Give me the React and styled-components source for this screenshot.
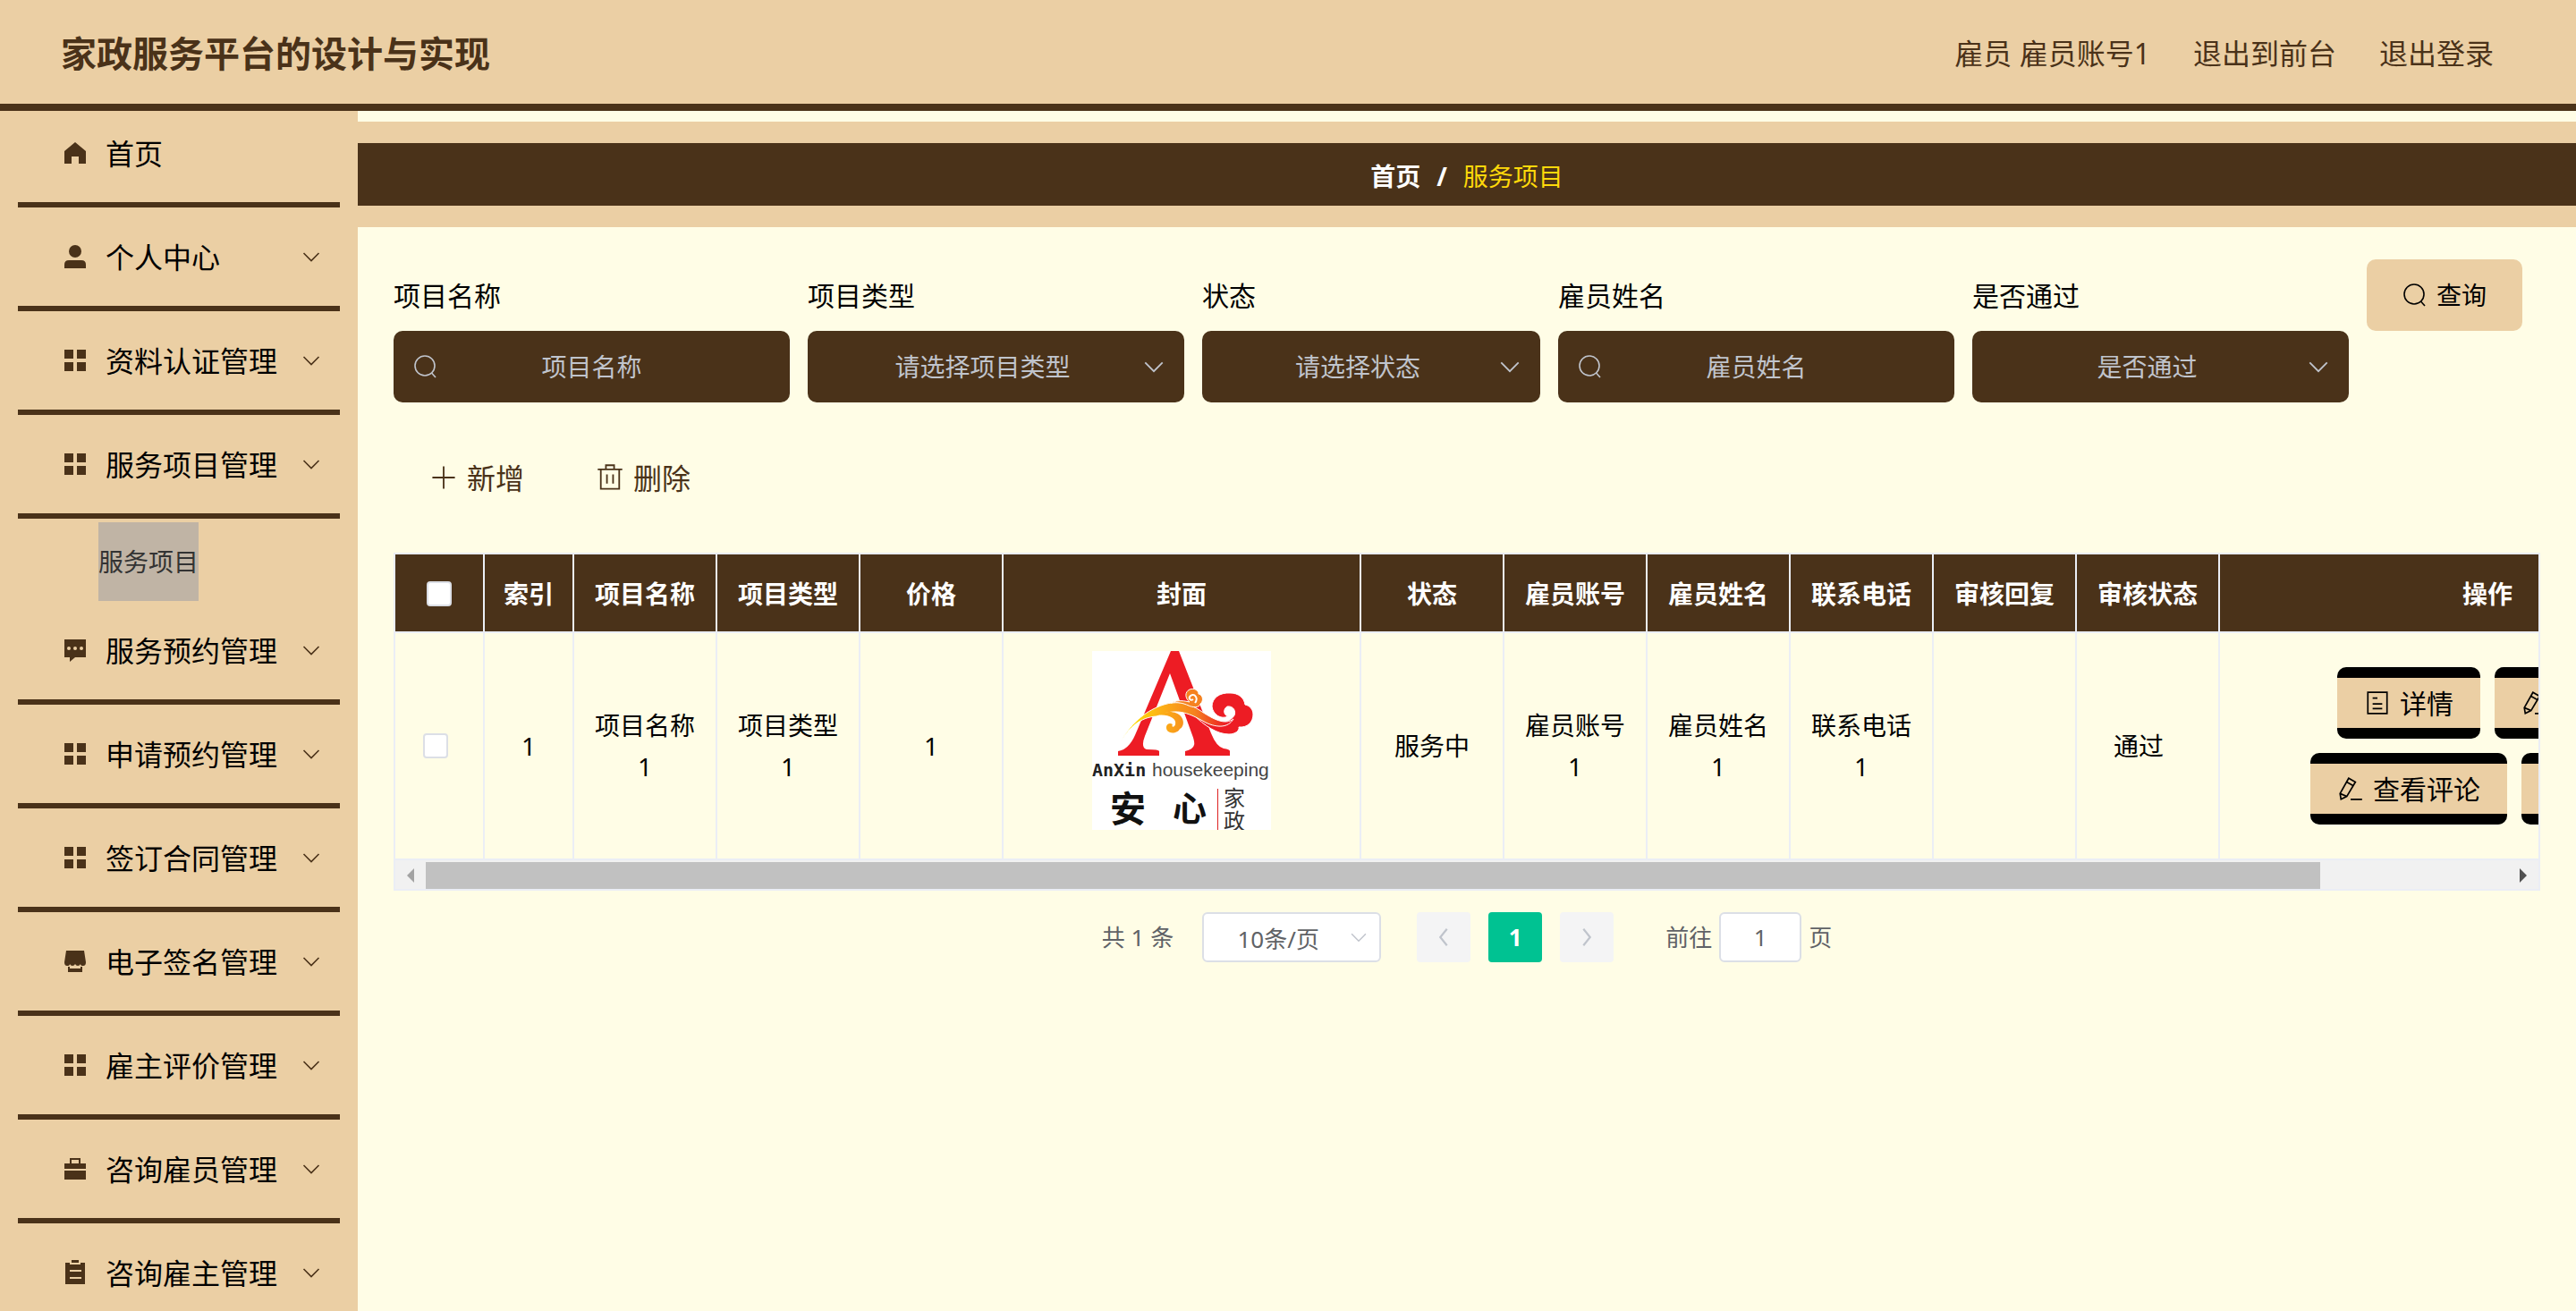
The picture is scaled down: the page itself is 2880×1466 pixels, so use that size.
import React, { useRef } from "react";
import styled, { createGlobalStyle, css } from "styled-components";

const tan = "#ebcfa4";
const brown = "#4a3219";
const cream = "#fffde6";
const line = "#ebeef5";

const GlobalStyle = createGlobalStyle`
  *, *::before, *::after { box-sizing: border-box; }
  html, body, #root { height: 100%; }
  body {
    margin: 0;
    overflow: hidden;
    background: ${cream};
    color: #000;
    font: 28px/46px "Noto Sans", "Noto Sans CJK SC", sans-serif;
  }
  button, input, select { font: inherit; color: inherit; margin: 0; }
  button { cursor: pointer; }
`;

const Page = styled.div`
  display: flex;
  flex-direction: column;
  min-height: 100vh;
`;

const Header = styled.header`
  position: relative;
  z-index: 1;
  display: flex;
  align-items: center;
  justify-content: space-between;
  height: 116px;
  padding: 4px 92px 0 68px;
  background: ${tan};
  box-shadow: 0 8px 0 ${brown};
  color: ${brown};
`;

const Title = styled.h1`
  margin: 0;
  font-size: 40px;
  line-height: 56px;
  font-weight: 700;
`;

const Account = styled.div`
  display: flex;
  gap: 48px;
  font-size: 32px;
`;

const HeaderLink = styled.a`
  color: inherit;
  text-decoration: none;
`;

const Body = styled.div`
  display: flex;
  flex: 1;
  min-height: 0;
`;

const Sidebar = styled.nav`
  flex: none;
  width: 400px;
  padding: 0 20px;
  background: ${tan};
`;

const MenuButton = styled.button`
  display: flex;
  align-items: center;
  gap: 20px;
  width: 100%;
  height: 116px;
  padding: 0 18px 0 50px;
  border: 0;
  border-bottom: 6px solid ${brown};
  background: none;
  color: #000;
  font-size: 32px;
  text-align: left;
`;

const MenuText = styled.span`
  flex: 1;
  padding-top: 2px;
`;

const SubMenu = styled.div`
  display: flex;
  padding: 4px 0 0 90px;
`;

const SubLink = styled.a`
  background: #c0b4a5;
  color: #333;
  line-height: 88px;
  text-decoration: none;
`;

const Icon = styled.svg`
  flex: none;
  width: ${(p) => p.$size || 28}px;
  height: ${(p) => p.$size || 28}px;
  color: ${(p) => p.$color || "inherit"};
`;

const Main = styled.main`
  flex: 1;
  min-width: 0;
  padding-top: 20px;
`;

const CrumbBand = styled.div`
  padding: 24px 0;
  background: ${tan};
`;

const Crumbs = styled.nav`
  display: flex;
  align-items: center;
  justify-content: center;
  height: 70px;
  padding-top: 4px;
  background: ${brown};
  color: #fff;
  font-weight: 700;
`;

const CrumbLink = styled.a`
  color: #fff;
  text-decoration: none;
`;

const Slash = styled.span`
  margin: 0 18px;
`;

const Current = styled.span`
  color: #ffd90a;
  font-weight: 400;
`;

const Content = styled.div`
  padding: 36px 40px;
`;

const Filters = styled.form`
  display: flex;
  flex-wrap: wrap;
  align-items: flex-start;
  gap: 20px;
`;

const Field = styled.div`
  display: flex;
  flex-direction: column;
  width: ${(p) => p.$width}px;
`;

const Label = styled.label`
  height: 80px;
  font-size: 30px;
  line-height: 82px;
`;

const Control = styled.div`
  position: relative;
`;

const controlStyle = css`
  width: 100%;
  height: 80px;
  border: 0;
  border-radius: 10px;
  background: ${brown};
  color: #c0c4cc;
  text-align: center;
  font-size: 28px;
`;

const TextInput = styled.input`
  ${controlStyle}
  padding: 0 60px;
  &::placeholder { color: #c0c4cc; opacity: 1; }
`;

const Picker = styled.select`
  ${controlStyle}
  appearance: none;
  padding: 0 60px 0 30px;
  text-align-last: center;
`;

const Affix = styled.span`
  position: absolute;
  top: 0;
  bottom: 0;
  ${(p) => p.$side}: ${(p) => p.$inset}px;
  display: flex;
  align-items: center;
  color: #c0c4cc;
  pointer-events: none;
`;

const QueryButton = styled.button`
  display: flex;
  align-items: center;
  justify-content: center;
  gap: 10px;
  width: 174px;
  height: 80px;
  border: 0;
  border-radius: 10px;
  background: ${tan};
  color: #000;
  font-size: 28px;
`;

const Toolbar = styled.div`
  display: flex;
  margin-top: 44px;
`;

const ToolButton = styled.button`
  display: flex;
  align-items: center;
  gap: 10px;
  height: 80px;
  padding: 0 40px;
  border: 0;
  background: none;
  color: ${brown};
  font-size: 32px;
`;

const ButtonText = styled.span`
  padding-top: 2px;
`;

const TableFrame = styled.div`
  margin-top: 44px;
  border: 2px solid ${line};
`;

const Viewport = styled.div`
  overflow-x: auto;
  scrollbar-width: none;
`;

const Table = styled.table`
  width: 2640px;
  table-layout: fixed;
  border-collapse: separate;
  border-spacing: 0;
  text-align: center;
`;

const Th = styled.th`
  height: 88px;
  padding: 2px 20px 0;
  border-right: 2px solid ${line};
  border-bottom: 2px solid ${line};
  background: ${brown};
  color: #fff;
  font-weight: 700;
`;

const Td = styled.td`
  padding: 20px ${(p) => p.$trail || 20}px 20px 20px;
  border-right: 2px solid ${line};
  border-bottom: 2px solid ${line};
`;

const Check = styled.input`
  appearance: none;
  display: block;
  width: 28px;
  height: 28px;
  margin: 0 auto !important;
  border: 2px solid #dcdfe6;
  border-radius: 4px;
  background: #fff;
`;

const Cover = styled.svg`
  display: block;
  width: 200px;
  height: 200px;
  margin: 0 auto 12px;
  background: #fff;
`;

const ActionRow = styled.div`
  display: flex;
  justify-content: center;
  gap: 16px;
  & + & { margin-top: 16px; }
`;

const ActionButton = styled.button`
  display: flex;
  align-items: center;
  gap: 10px;
  height: 80px;
  padding: 0 30px;
  border: solid #000;
  border-width: 12px 0;
  border-radius: 10px;
  background: ${tan};
  color: #000;
  font-size: 30px;
  white-space: nowrap;
`;

const ScrollBar = styled.div`
  display: flex;
  height: 32px;
  padding-top: 2px;
  background: #f1f1f1;
`;

const ScrollArrow = styled.button`
  display: flex;
  align-items: center;
  justify-content: center;
  width: 34px;
  padding: 0;
  border: 0;
  background: none;
`;

const Track = styled.div`
  flex: 1;
`;

const Thumb = styled.div`
  width: 91%;
  height: 100%;
  background: #c1c1c1;
`;

const Pager = styled.div`
  display: flex;
  align-items: center;
  justify-content: center;
  margin-top: 24px;
  color: #606266;
  font-size: 26px;
  line-height: 56px;
`;

const PageSize = styled(Control)`
  width: 200px;
  margin: 0 40px 0 32px;
`;

const boxStyle = css`
  height: 56px;
  border: 2px solid #dcdfe6;
  border-radius: 6px;
  background: #fff;
  color: #606266;
  font-size: 26px;
  text-align: center;
`;

const SizeSelect = styled.select`
  ${boxStyle}
  display: block;
  width: 100%;
  appearance: none;
  padding: 0 50px 0 20px;
  text-align-last: center;
`;

const PageButton = styled.button`
  display: flex;
  align-items: center;
  justify-content: center;
  width: 60px;
  height: 56px;
  padding: 0;
  border: 0;
  border-radius: 4px;
  background: ${(p) => (p.$active ? "#00c292" : "#f4f4f5")};
  color: ${(p) => (p.$active ? "#fff" : "#c0c4cc")};
  font-weight: 700;
  & + & { margin-left: 20px; }
`;

const Jump = styled.label`
  display: flex;
  align-items: center;
  gap: 8px;
  margin-left: 58px;
`;

const JumpInput = styled.input`
  ${boxStyle}
  width: 92px;
`;

const stroke = { fill: "none", stroke: "currentColor", strokeWidth: 1.6 };

const shapes = {
  home: <path fill="currentColor" d="M14 2 26 12V26H18V18H10V26H2V12Z" />,
  user: (
    <g fill="currentColor">
      <ellipse cx="14" cy="8" rx="7" ry="7" />
      <path d="M2 27V23Q2 18 7 18H21Q26 18 26 23V27Z" />
    </g>
  ),
  grid: <path fill="currentColor" d="M2 2H12V12H2ZM16 2H26V12H16ZM2 16H12V26H2ZM16 16H26V26H16Z" />,
  chat: (
    <g>
      <path fill="currentColor" d="M2 2H26V22H14L8 27V22H2Z" />
      <g fill={tan}>
        <circle cx="7" cy="12" r="2" />
        <circle cx="14" cy="12" r="2" />
        <circle cx="21" cy="12" r="2" />
      </g>
    </g>
  ),
  shop: (
    <g fill="currentColor">
      <path d="M4 2H24L26 15Q26 19 23 19 20 19 20 17 19 19 17 19 15 19 14 17 13 19 11 19 9 19 8 17 8 19 5 19 2 19 2 15Z" />
      <path d="M6 20H8V22H20V20H22V26H6Z" />
    </g>
  ),
  briefcase: <path fill="currentColor" fillRule="evenodd" d="M8 8V2H20V8H26V14H2V8ZM10 4V8H18V4ZM2 16H26V26H2Z" />,
  clipboard: <path fill="currentColor" fillRule="evenodd" d="M10 0H18V3H10ZM3 3H8V5H20V3H25V27H3ZM8 11V13H21V11ZM8 19V21H21V19Z" />,
  down: <path {...stroke} d="M5.500 10 14 18.500 22.500 10" />,
  left: <path {...stroke} strokeWidth="2.400" d="M18 4 10 14 18 24" />,
  right: <path {...stroke} strokeWidth="2.400" d="M10 4 18 14 10 24" />,
  search: (
    <g {...stroke}>
      <circle cx="13" cy="13" r="11" />
      <path d="M20.500 21 25 26" />
    </g>
  ),
  plus: <path {...stroke} d="M14 3V25M3 14H25" />,
  trash: <path {...stroke} d="M2 6H26M5 6V25H23V6M10 6V2H18V6M11 11V20M17 11V20" />,
  detail: <path {...stroke} d="M4 3H24V25H4ZM9 9H14M9 15H19M9 20H19" />,
  edit: <path {...stroke} d="M3 19 12 3 19 7 10 22 4 25ZM10 7 17 11M3 19 10 22M14 25H26" />,
};

function Glyph({ name, size, color }) {
  return (
    <Icon viewBox="0 0 28 28" $size={size} $color={color} aria-hidden="true">
      {shapes[name]}
    </Icon>
  );
}

const menu = [
  { icon: "home", text: "首页" },
  { icon: "user", text: "个人中心", more: true },
  { icon: "grid", text: "资料认证管理", more: true },
  { icon: "grid", text: "服务项目管理", more: true, child: "服务项目" },
  { icon: "chat", text: "服务预约管理", more: true },
  { icon: "grid", text: "申请预约管理", more: true },
  { icon: "grid", text: "签订合同管理", more: true },
  { icon: "shop", text: "电子签名管理", more: true },
  { icon: "grid", text: "雇主评价管理", more: true },
  { icon: "briefcase", text: "咨询雇员管理", more: true },
  { icon: "clipboard", text: "咨询雇主管理", more: true },
];

const filters = [
  { id: "name", label: "项目名称", hint: "项目名称", width: 443 },
  { id: "type", label: "项目类型", hint: "请选择项目类型", width: 421, select: true },
  { id: "state", label: "状态", hint: "请选择状态", width: 378, select: true },
  { id: "employee", label: "雇员姓名", hint: "雇员姓名", width: 443 },
  { id: "passed", label: "是否通过", hint: "是否通过", width: 421, select: true },
];

const columns = [
  ["索引", 100],
  ["项目名称", 160],
  ["项目类型", 160],
  ["价格", 160],
  ["封面", 400],
  ["状态", 160],
  ["雇员账号", 160],
  ["雇员姓名", 160],
  ["联系电话", 160],
  ["审核回复", 160],
  ["审核状态", 160],
  ["操作", 600],
];

function FilterField({ id, label, hint, width, select }) {
  return (
    <Field $width={width}>
      <Label htmlFor={id}>{label}</Label>
      <Control>
        {select ? (
          <Picker id={id}>
            <option>{hint}</option>
          </Picker>
        ) : (
          <TextInput id={id} placeholder={hint} />
        )}
        <Affix $side={select ? "right" : "left"} $inset={select ? 18 : 22}>
          <Glyph name={select ? "down" : "search"} size={select ? 32 : 28} />
        </Affix>
      </Control>
    </Field>
  );
}

function CoverImage() {
  return (
    <Cover viewBox="0 0 200 200" role="img" aria-label="AnXin housekeeping">
      <defs>
        <linearGradient id="ribbon" gradientUnits="userSpaceOnUse" x1="32" x2="150" y1="0" y2="0">
          <stop offset="0" stopColor="#fff200" />
          <stop offset="0.35" stopColor="#fdb515" />
          <stop offset="0.7" stopColor="#f58220" />
          <stop offset="1" stopColor="#ed1c24" />
        </linearGradient>
      </defs>
      <path
        fill="#ed1c24"
        d="M88 0H97L133 92Q139 107 147 109 154 110 154 112V117H104V112Q113 110 114 105 115 102 112 94L87 25 59 95Q54 108 61 110 75 110 75 112V117H29V112Q41 110 48 94Z"
      />
      <path
        fill="#ed1c24"
        stroke="#fff"
        strokeWidth="1"
        d="M112 70C126 84 140 93 153 93 160 93 165 89 164 85 174 86 180 79 180 71 180 65 176 61 171 60 170 52 163 47 155 47 142 46 134 53 134 62 135 71 144 77 152 73 147 72 146 65 151 62 158 61 161 67 159 72 154 80 144 81 134 76L112 62Z"
      />
      <path
        fill="url(#ribbon)"
        stroke="#fff"
        strokeWidth="1"
        d="M32 101C45 78 62 66 80 60 96 55 107 58 120 66 136 77 149 83 158 76 152 86 140 86 127 80 111 71 96 62 72 73 53 74 42 86 32 101Z"
      />
      <path
        fill="url(#ribbon)"
        d="M72 72C82 66 95 67 100 74 104 80 101 86 98 87 96 92 87 93 84 89 81 84 85 79 90 82 88 85 92 86 93 82 95 75 84 70 72 72Z"
      />
      <path
        fill="#f58220"
        stroke="#fff"
        strokeWidth="1"
        d="M88 58C97 54 104 56 109 57 104 53 103 46 109 43 114 41 119 44 119 48 124 49 125 56 121 59 120 64 112 63 108 61 101 58 96 57 88 58Z"
      />
      <path fill="none" stroke="#fff" strokeWidth="2" d="M115 58C119 53 115 47 110 50 107 53 110 56 113 54" />
      <text x="0" y="140" fontFamily="DejaVu Sans Mono, monospace" fontSize="20" fontWeight="700" fill="#222">AnXin</text>
      <text x="67" y="140" fontFamily="Liberation Sans, sans-serif" fontSize="21" fill="#444">housekeeping</text>
      <text x="20" y="191" fontFamily="Noto Sans CJK SC, sans-serif" fontSize="40" fontWeight="700" fill="#111">安</text>
      <text x="90" y="190" fontFamily="Noto Sans CJK SC, sans-serif" fontSize="38" fontWeight="700" fill="#111">心</text>
      <path stroke="#d22" d="M140.500 154V200" />
      <text x="147" y="173" fontFamily="Noto Sans CJK SC, sans-serif" fontSize="24" fill="#333">家</text>
      <text x="147" y="199" fontFamily="Noto Sans CJK SC, sans-serif" fontSize="24" fill="#333">政</text>
    </Cover>
  );
}

function Action({ icon, children }) {
  return (
    <ActionButton type="button">
      <Glyph name={icon} size={30} />
      <ButtonText>{children}</ButtonText>
    </ActionButton>
  );
}

function ProjectTable() {
  const view = useRef(null);
  const scroll = (by) => view.current.scrollBy({ left: by });
  return (
    <TableFrame>
      <Viewport ref={view}>
        <Table>
          <colgroup>
            <col width="100" />
            {columns.map(([name, width]) => (
              <col key={name} width={width} />
            ))}
          </colgroup>
          <thead>
            <tr>
              <Th>
                <Check type="checkbox" aria-label="全选" />
              </Th>
              {columns.map(([name]) => (
                <Th key={name}>{name}</Th>
              ))}
            </tr>
          </thead>
          <tbody>
            <tr>
              <Td $trail={28}>
                <Check type="checkbox" aria-label="选择" />
              </Td>
              <Td>1</Td>
              <Td>项目名称1</Td>
              <Td>项目类型1</Td>
              <Td>1</Td>
              <Td>
                <CoverImage />
              </Td>
              <Td>服务中</Td>
              <Td>雇员账号1</Td>
              <Td>雇员姓名1</Td>
              <Td>联系电话1</Td>
              <Td />
              <Td $trail={40}>通过</Td>
              <Td>
                <ActionRow>
                  <Action icon="detail">详情</Action>
                  <Action icon="edit">修改</Action>
                </ActionRow>
                <ActionRow>
                  <Action icon="edit">查看评论</Action>
                  <Action icon="trash">删除</Action>
                </ActionRow>
              </Td>
            </tr>
          </tbody>
        </Table>
      </Viewport>
      <ScrollBar>
        <ScrollArrow type="button" aria-label="向左滚动" onClick={() => scroll(-120)}>
          <svg width="8" height="16" viewBox="0 0 8 16">
            <path fill="#a3a3a3" d="M8 0V16L0 8Z" />
          </svg>
        </ScrollArrow>
        <Track>
          <Thumb />
        </Track>
        <ScrollArrow type="button" aria-label="向右滚动" onClick={() => scroll(120)}>
          <svg width="8" height="16" viewBox="0 0 8 16">
            <path fill="#505050" d="M0 0V16L8 8Z" />
          </svg>
        </ScrollArrow>
      </ScrollBar>
    </TableFrame>
  );
}

export default function App() {
  return (
    <Page>
      <GlobalStyle />
      <Header>
        <Title>家政服务平台的设计与实现</Title>
        <Account>
          <span>雇员 雇员账号1</span>
          <HeaderLink href="#front">退出到前台</HeaderLink>
          <HeaderLink href="#logout">退出登录</HeaderLink>
        </Account>
      </Header>
      <Body>
        <Sidebar>
          {menu.map((item) => (
            <React.Fragment key={item.text}>
              <MenuButton type="button">
                <Glyph name={item.icon} color={brown} size={28} />
                <MenuText>{item.text}</MenuText>
                {item.more && <Glyph name="down" size={28} color={brown} />}
              </MenuButton>
              {item.child && (
                <SubMenu>
                  <SubLink href="#project">{item.child}</SubLink>
                </SubMenu>
              )}
            </React.Fragment>
          ))}
        </Sidebar>
        <Main>
          <CrumbBand>
            <Crumbs>
              <CrumbLink href="#home">首页</CrumbLink>
              <Slash>/</Slash>
              <Current>服务项目</Current>
            </Crumbs>
          </CrumbBand>
          <Content>
            <Filters>
              {filters.map((f) => (
                <FilterField key={f.id} {...f} />
              ))}
              <QueryButton type="button">
                <Glyph name="search" size={28} />
                查询
              </QueryButton>
            </Filters>
            <Toolbar>
              <ToolButton type="button">
                <Glyph name="plus" size={32} />
                <ButtonText>新增</ButtonText>
              </ToolButton>
              <ToolButton type="button">
                <Glyph name="trash" size={32} />
                <ButtonText>删除</ButtonText>
              </ToolButton>
            </Toolbar>
            <ProjectTable />
            <Pager>
              <span>共 1 条</span>
              <PageSize>
                <SizeSelect aria-label="每页条数">
                  <option>10条/页</option>
                </SizeSelect>
                <Affix $side="right" $inset={12}>
                  <Glyph name="down" size={26} />
                </Affix>
              </PageSize>
              <PageButton type="button" aria-label="上一页">
                <Glyph name="left" size={26} />
              </PageButton>
              <PageButton type="button" $active>1</PageButton>
              <PageButton type="button" aria-label="下一页">
                <Glyph name="right" size={26} />
              </PageButton>
              <Jump>
                前往
                <JumpInput defaultValue="1" />
                页
              </Jump>
            </Pager>
          </Content>
        </Main>
      </Body>
    </Page>
  );
}
